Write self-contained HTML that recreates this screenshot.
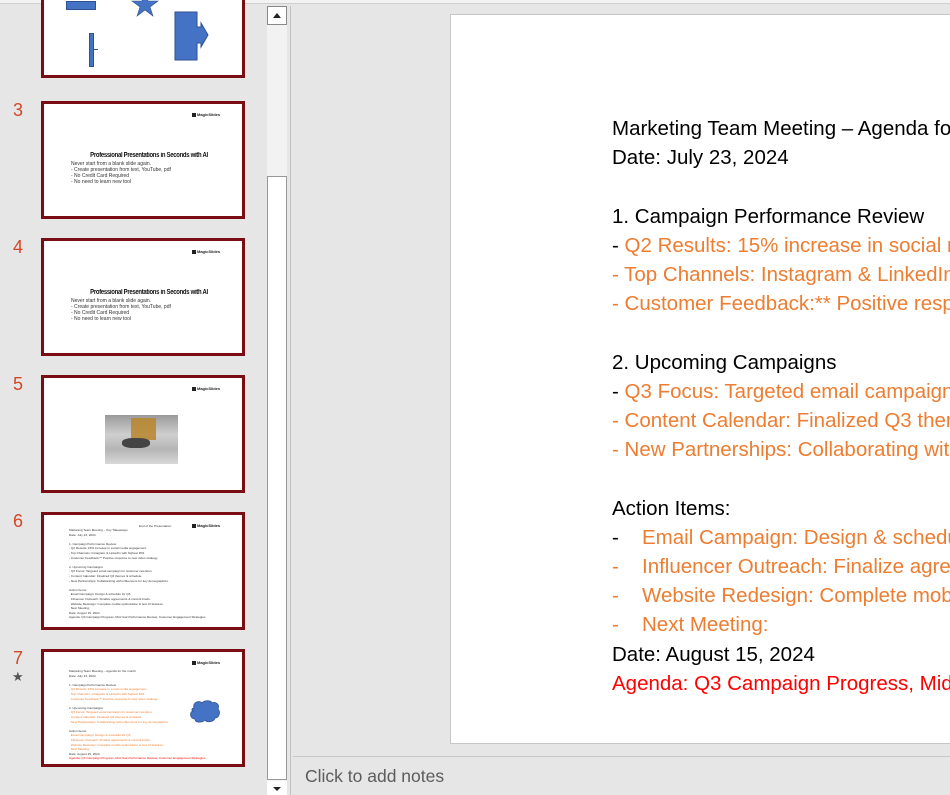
<!DOCTYPE html>
<html><head><meta charset="utf-8"><style>
*{margin:0;padding:0;box-sizing:border-box}
body{width:950px;height:795px;overflow:hidden;background:#e6e6e6;font-family:"Liberation Sans",sans-serif;position:relative}
.topline{position:absolute;left:0;top:0;width:950px;height:4px;background:#f3f3f3;border-bottom:1px solid #cfcfcf}
.th{position:absolute;left:41px;width:204px;height:118px;border:3px solid #7a0c13;background:#fff;overflow:hidden}
.num{position:absolute;left:13px;font-size:18px;color:#d24726}
.logo{position:absolute;left:148px;top:8px;font-size:4px;font-weight:bold;color:#222}
.logo:before{content:"";display:inline-block;width:4px;height:4px;background:#222;margin-right:1px;vertical-align:middle}
.tt{position:absolute;left:20px;top:48px;width:170px;text-align:center;font-size:7px;font-weight:bold;color:#111;letter-spacing:-.35px;transform:scaleX(.85)}
.tb{position:absolute;left:27px;top:57px;font-size:5px;color:#333;line-height:6px}
.sm{position:absolute;left:25px;font-size:3.1px;line-height:4.6px;color:#333;white-space:nowrap}
.o{color:#ed7d31}.r{color:#ff0000}
.sb{position:absolute;left:267px;top:6px;width:20px;height:789px;background:#f2f2f2}
.main{position:absolute;left:450px;top:14px;width:510px;height:730px;background:#fff;border:1px solid #c6c6c6;overflow:hidden}
.txt{position:absolute;left:161px;top:99px;font-size:20.5px;line-height:29.2px;white-space:nowrap;color:#000;font-family:"Liberation Sans","DejaVu Sans",sans-serif}
.ind{display:inline-block;width:30px}
</style></head><body>
<div class="topline"></div>

<div class="th" style="top:-40px">
 <div style="position:absolute;left:22px;top:38px;width:30px;height:9px;background:#4472c4;border:1px solid #2f528f"></div>
 <svg style="position:absolute;left:86px;top:34px" width="30" height="20" viewBox="0 0 30 20"><polygon points="15,-6 18,4 28,4 20,10 23,19 15,13 7,19 10,10 2,4 12,4" fill="#4472c4" stroke="#2f528f" stroke-width=".6"/></svg>
 <div style="position:absolute;left:45px;top:70px;width:5px;height:34px;background:#4472c4;border:1px solid #2f528f"></div>
 <div style="position:absolute;left:50px;top:86px;width:4px;height:1px;background:#2f528f"></div>
 <svg style="position:absolute;left:130px;top:48px" width="40" height="52" viewBox="0 0 40 52"><polygon points="1,1 23,1 23,16 27,16 27,12 34,24 27,36 27,32 23,32 23,49 1,49" fill="#4472c4" stroke="#2f528f" stroke-width="1"/></svg>
</div>

<div class="num" style="top:100px">3</div>
<div class="th" style="top:101px"><div class="logo">MagicSlides</div><div class="tt">Professional Presentations in Seconds with AI</div><div class="tb">Never start from a blank slide again.<br><span style="line-height:5px">- Create presentation from text, YouTube, pdf<br>- No Credit Card Required<br>- No need to learn new tool</span></div></div>

<div class="num" style="top:237px">4</div>
<div class="th" style="top:238px"><div class="logo">MagicSlides</div><div class="tt">Professional Presentations in Seconds with AI</div><div class="tb">Never start from a blank slide again.<br><span style="line-height:5px">- Create presentation from text, YouTube, pdf<br>- No Credit Card Required<br>- No need to learn new tool</span></div></div>

<div class="num" style="top:374px">5</div>
<div class="th" style="top:375px"><div class="logo">MagicSlides</div>
 <div style="position:absolute;left:61px;top:37px;width:73px;height:49px;background:linear-gradient(180deg,#9a9a9a,#cfcfcf 40%,#b5b5b5 70%,#d8d8d8)"></div>
 <div style="position:absolute;left:87px;top:40px;width:25px;height:22px;background:#b8862c;opacity:.85"></div>
 <div style="position:absolute;left:78px;top:60px;width:28px;height:10px;background:#444;border-radius:40%"></div>
</div>

<div class="num" style="top:511px">6</div>
<div class="th" style="top:512px"><div class="logo">MagicSlides</div>
 <div class="sm" style="top:9px;left:95px">End of the Presentation</div>
 <div class="sm" style="top:13px">Marketing Team Meeting – Key Takeaways<br>Date: July 23, 2024<br><br>1. Campaign Performance Review<br>- Q2 Results: 15% increase in social media engagement.<br>- Top Channels: Instagram &amp; LinkedIn with highest ROI.<br>- Customer Feedback:** Positive response to new video strategy.<br><br>2. Upcoming Campaigns<br>- Q3 Focus: Targeted email campaign for customer retention.<br>- Content Calendar: Finalized Q3 themes &amp; schedule.<br>- New Partnerships: Collaborating with influencers for key demographics.<br><br>Action Items:<br>&nbsp;&nbsp;Email Campaign: Design &amp; schedule for Q3.<br>&nbsp;&nbsp;Influencer Outreach: Finalize agreements &amp; content briefs.<br>&nbsp;&nbsp;Website Redesign: Complete mobile optimization &amp; test UI features.<br>&nbsp;&nbsp;Next Meeting:<br>Date: August 15, 2024<br>Agenda: Q3 Campaign Progress, Mid-Year Performance Review, Customer Engagement Strategies</div>
</div>

<div class="num" style="top:648px">7</div>
<div style="position:absolute;left:12px;top:669px;font-size:13px;color:#555">★</div>
<div class="th" style="top:649px"><div class="logo">MagicSlides</div>
 <div class="sm" style="top:17px">Marketing Team Meeting – Agenda for the month<br>Date: July 23, 2024<br><br>1. Campaign Performance Review<br><span class="o">- Q2 Results: 15% increase in social media engagement.<br>- Top Channels: Instagram &amp; LinkedIn with highest ROI.<br>- Customer Feedback:** Positive response to new video strategy.</span><br><br>2. Upcoming Campaigns<br><span class="o">- Q3 Focus: Targeted email campaign for customer retention.<br>- Content Calendar: Finalized Q3 themes &amp; schedule.<br>- New Partnerships: Collaborating with influencers for key demographics.</span><br><br>Action Items:<br><span class="o">&nbsp;&nbsp;Email Campaign: Design &amp; schedule for Q3.<br>&nbsp;&nbsp;Influencer Outreach: Finalize agreements &amp; content briefs.<br>&nbsp;&nbsp;Website Redesign: Complete mobile optimization &amp; test UI features.<br>&nbsp;&nbsp;Next Meeting:</span><br>Date: August 15, 2024<br><span class="r">Agenda: Q3 Campaign Progress, Mid-Year Performance Review, Customer Engagement Strategies</span></div>
 <svg style="position:absolute;left:145px;top:48px" width="32" height="24" viewBox="0 0 32 24"><path d="M5,8 C3,2 11,0 13,3 C15,0 22,0 23,3 C27,1 31,5 29,9 C32,12 30,18 26,18 C25,22 18,23 16,20 C13,23 6,23 6,19 C1,19 0,12 4,11 C2,10 3,8 5,8Z" fill="#4472c4" stroke="#2f528f" stroke-width=".8"/></svg>
</div>

<div class="sb">
 <div style="position:absolute;left:0;top:0;width:20px;height:19px;background:#fff;border:1px solid #888"><div style="position:absolute;left:5px;top:6px;border-left:4px solid transparent;border-right:4px solid transparent;border-bottom:5px solid #222"></div></div>
 <div style="position:absolute;left:0;top:170px;width:20px;height:604px;background:#fff;border:1px solid #999"></div>
 <div style="position:absolute;left:0;top:775px;width:20px;height:14px;background:#fff"><div style="position:absolute;left:6px;top:6px;border-left:4px solid transparent;border-right:4px solid transparent;border-top:4px solid #222"></div></div>
</div>
<div style="position:absolute;left:290px;top:6px;width:1px;height:789px;background:#c0c0c0"></div>

<div class="main"><div class="txt">
Marketing Team Meeting – Agenda for the month<br>
Date: July 23, 2024<br><br>
1. Campaign Performance Review<br>
- <span class="o">Q2 Results: 15% increase in social media engagement.</span><br>
<span class="o">- Top Channels: Instagram &amp; LinkedIn with highest ROI.</span><br>
<span class="o">- Customer Feedback:** Positive response to new video strategy.</span><br><br>
2. Upcoming Campaigns<br>
- <span class="o">Q3 Focus: Targeted email campaign for customer retention.</span><br>
<span class="o">- Content Calendar: Finalized Q3 themes &amp; schedule.</span><br>
<span class="o">- New Partnerships: Collaborating with influencers.</span><br><br>
Action Items:<br>
<span class="ind">-</span><span class="o">Email Campaign: Design &amp; schedule for Q3.</span><br>
<span class="o"><span class="ind">-</span>Influencer Outreach: Finalize agreements.</span><br>
<span class="o"><span class="ind">-</span>Website Redesign: Complete mobile optimization.</span><br>
<span class="o"><span class="ind">-</span>Next Meeting:</span><br>
Date: August 15, 2024<br>
<span class="r">Agenda: Q3 Campaign Progress, Mid-Year Review</span>
</div></div>

<div style="position:absolute;left:293px;top:756px;width:657px;height:1px;background:#c8c8c8"></div>
<div style="position:absolute;left:305px;top:766px;font-size:17.5px;color:#5c5c5c">Click to add notes</div>
</body></html>
